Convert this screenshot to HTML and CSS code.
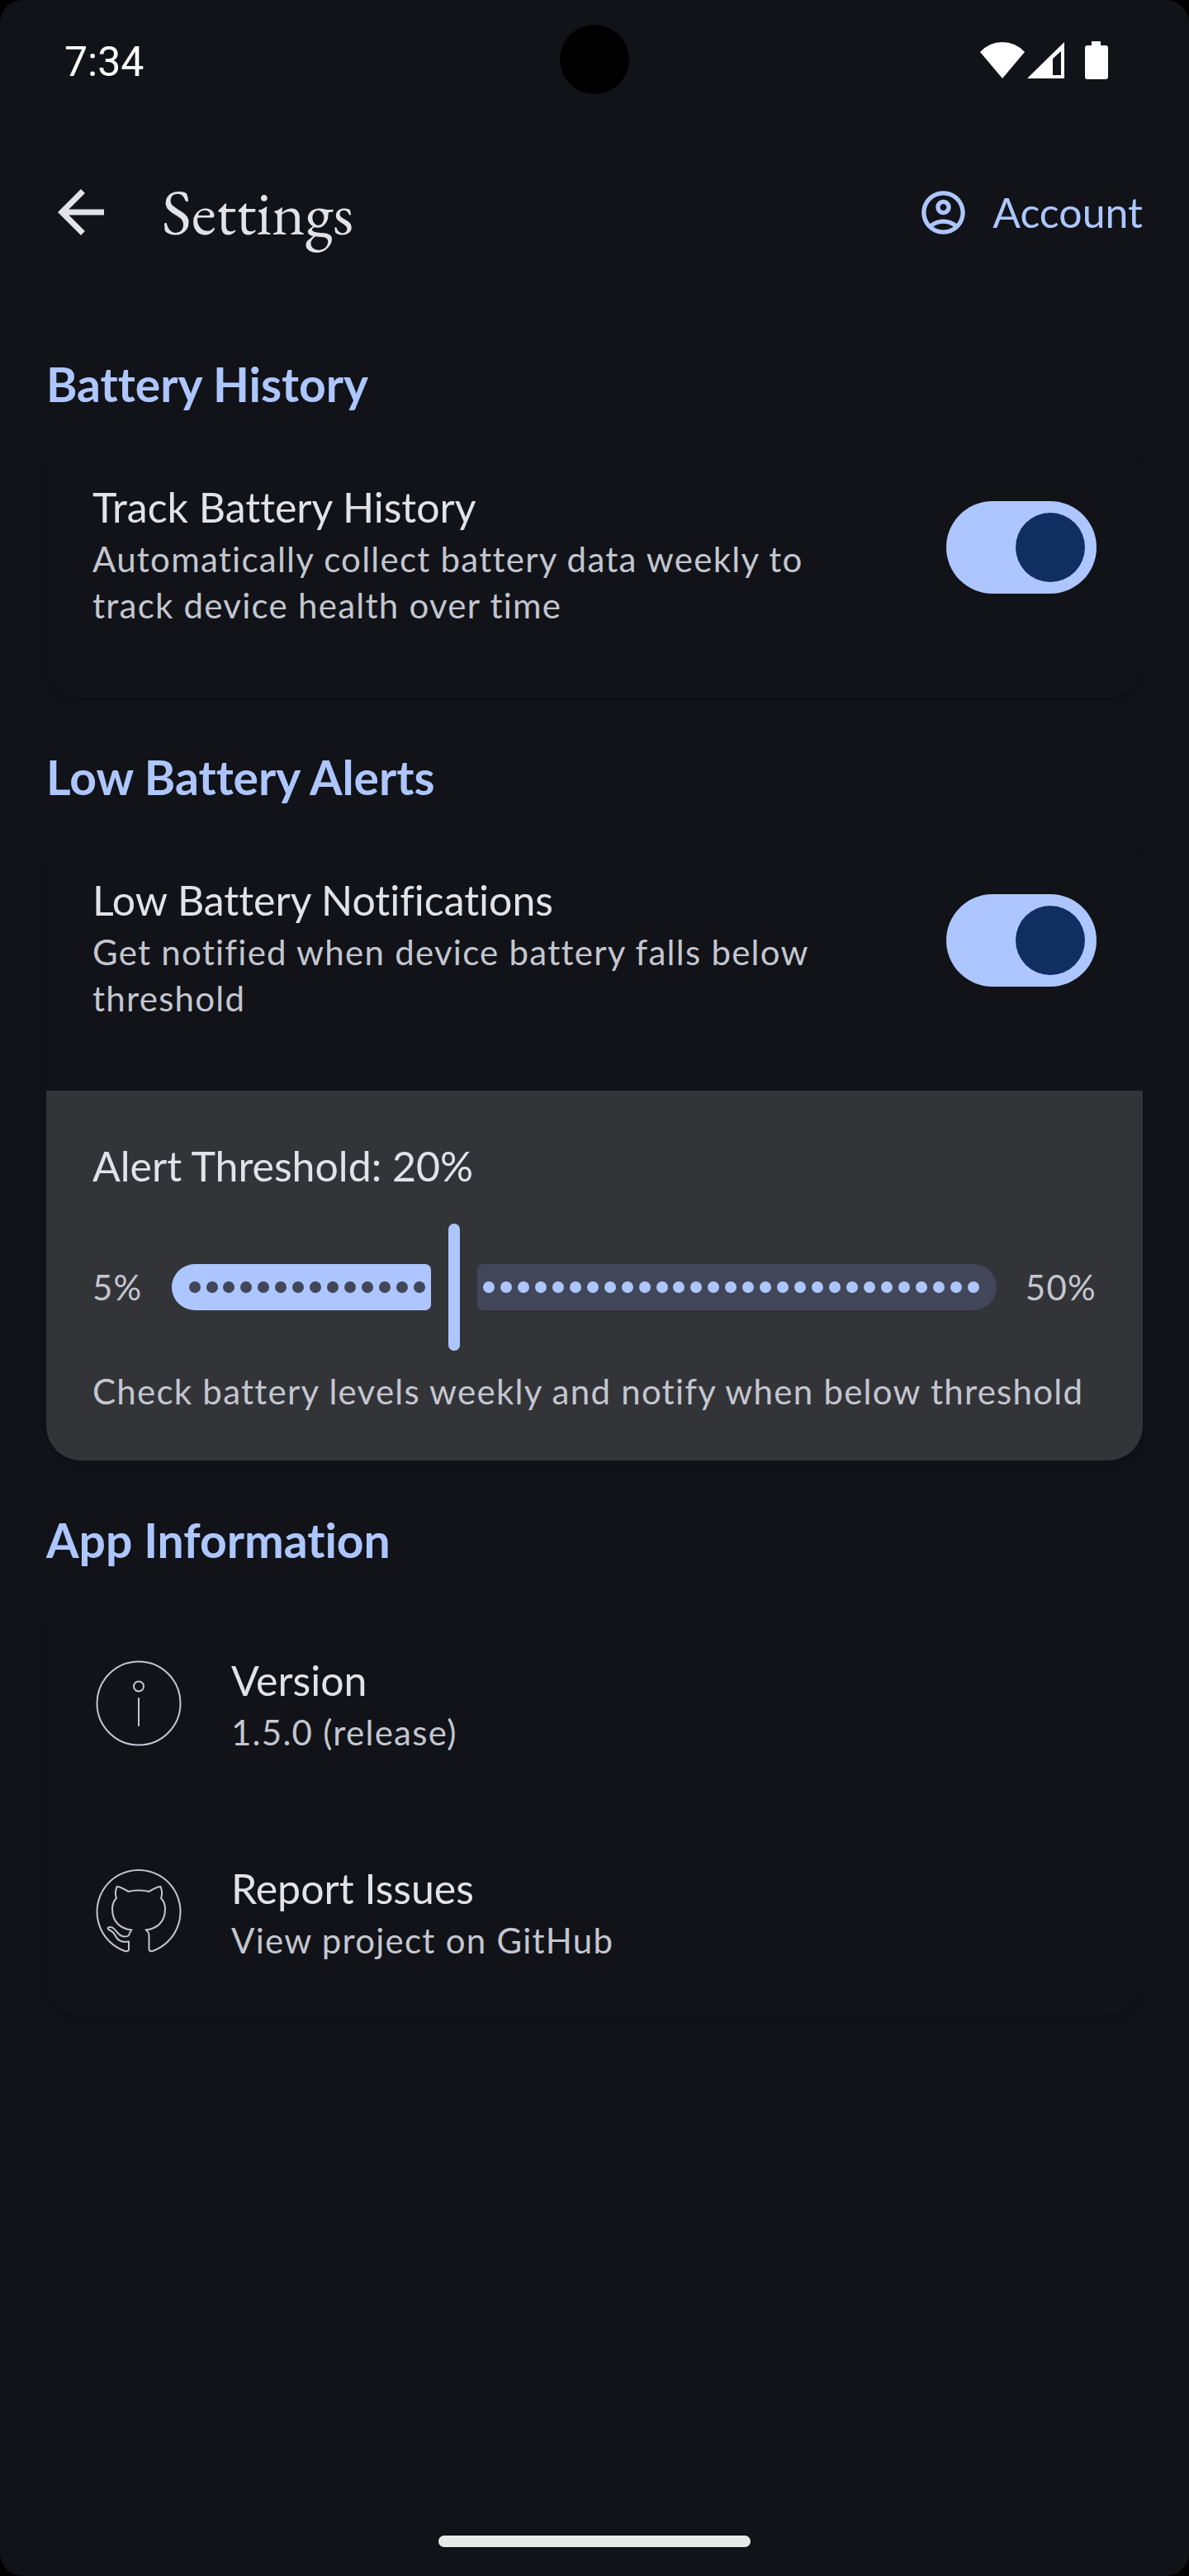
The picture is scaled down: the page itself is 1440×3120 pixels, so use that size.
FILE: index.html
```html
<!DOCTYPE html>
<html lang="en">
<head>
<meta charset="utf-8">
<meta name="viewport" content="width=device-width, initial-scale=1">
<title>Settings</title>
<link rel="stylesheet" href="styles.css">
</head>
<body>
<div class="screen">
  <div class="status-bar">
    <span class="clock">7:34</span>
    <span class="camera"></span>
    <span class="status-icons">
      <svg class="icon-wifi" viewBox="0 0 54 46" aria-hidden="true"><path d="M0 13Q11 1 27 1T54 13L27 45Z"/></svg>
      <svg class="icon-signal" viewBox="0 0 46 46" aria-hidden="true"><path fill-rule="evenodd" d="M0 45L45 1V45ZM31 21V41H41V12Z"/></svg>
      <svg class="icon-battery" viewBox="0 0 28 46" aria-hidden="true"><path d="M8 0H19V5H25Q28 5 28 8V43Q28 46 25 46H3Q0 46 0 43V8Q0 5 3 5H8Z"/></svg>
    </span>
  </div>

  <header class="app-bar">
    <button class="back" type="button" aria-label="Back">
      <svg viewBox="0 0 24 24" aria-hidden="true"><path d="M20 11H7.83l5.59-5.59L12 4l-8 8 8 8 1.41-1.41L7.83 13H20z"/></svg>
    </button>
    <h1>Settings</h1>
    <button class="account" type="button">
      <svg viewBox="0 0 24 24" aria-hidden="true"><path fill-rule="evenodd" d="M12 2C6.48 2 2 6.48 2 12s4.48 10 10 10 10-4.48 10-10S17.52 2 12 2zM7.35 18.5C8.66 17.56 10.26 17 12 17s3.34.56 4.65 1.5C15.34 19.44 13.74 20 12 20s-3.34-.56-4.65-1.5zm10.79-1.38C16.45 15.8 14.32 15 12 15s-4.45.8-6.14 2.12C4.7 15.73 4 13.95 4 12c0-4.42 3.58-8 8-8s8 3.58 8 8c0 1.950-.7 3.730-1.860 5.120z"/><path fill-rule="evenodd" d="M12 6c-1.930 0-3.500 1.570-3.500 3.500S10.070 13 12 13s3.500-1.570 3.500-3.500S13.930 6 12 6zm0 5c-.83 0-1.500-.67-1.500-1.500S11.170 8 12 8s1.500.67 1.500 1.500S12.830 11 12 11z"/></svg>
      <span>Account</span>
    </button>
  </header>

  <main class="content">
    <section>
      <h2>Battery History</h2>
      <div class="card">
        <label class="switch-row">
          <span class="text">
            <span class="title">Track Battery History</span>
            <span class="sub">Automatically collect battery data weekly to track device health over time</span>
          </span>
          <input class="switch" type="checkbox" role="switch" checked>
        </label>
      </div>
    </section>

    <section>
      <h2>Low Battery Alerts</h2>
      <div class="card">
        <label class="switch-row">
          <span class="text">
            <span class="title">Low Battery Notifications</span>
            <span class="sub">Get notified when device battery falls below threshold</span>
          </span>
          <input class="switch" type="checkbox" role="switch" checked>
        </label>
        <div class="panel">
          <label class="title" for="threshold">Alert Threshold: 20%</label>
          <div class="slider-row">
            <span class="sub">5%</span>
            <div class="slider">
              <div class="track">
                <div class="active"><i></i><i></i><i></i><i></i><i></i><i></i><i></i><i></i><i></i><i></i><i></i><i></i><i></i><i></i></div>
                <div class="inactive"><i></i><i></i><i></i><i></i><i></i><i></i><i></i><i></i><i></i><i></i><i></i><i></i><i></i><i></i><i></i><i></i><i></i><i></i><i></i><i></i><i></i><i></i><i></i><i></i><i></i><i></i><i></i><i></i><i></i></div>
              </div>
              <input id="threshold" type="range" min="5" max="50" step="1" value="20">
            </div>
            <span class="sub">50%</span>
          </div>
          <p class="sub">Check battery levels weekly and notify when below threshold</p>
        </div>
      </div>
    </section>

    <section>
      <h2>App Information</h2>
      <div class="card">
        <div class="info-row">
          <svg class="line-icon" viewBox="0 0 112 112" aria-hidden="true"><circle cx="56" cy="56" r="50.500"/><circle cx="56" cy="35.500" r="6"/><path d="M56 50V83"/></svg>
          <span class="text">
            <span class="title">Version</span>
            <span class="sub">1.5.0 (release)</span>
          </span>
        </div>
        <a class="info-row" href="#issues">
          <svg class="line-icon" viewBox="0 0 112 112" aria-hidden="true"><path d="M44 102V92.500C36 94 31 92 28 86C26 82 24 80 21 79C16 76 20 74 24 75.500C30 79 31 86.500 38 86.500C43 86.500 44.500 86 45 82L47.500 78.500C34 77 24 69 24 53C24 47 26 43 29 40C27 35 28 30 29.500 26C34 26 38 29 43.500 32Q56 29 68.500 32C74 29 78 26 82.500 26C84 30 85 35 83 40C86 43 88 47 88 53C88 69 78 77 64.500 78.500Q68.500 81 68.500 85V102Q69 105 73 104A50.500 50.500 0 1 0 39 104Q44 105 44 102Z"/></svg>
          <span class="text">
            <span class="title">Report Issues</span>
            <span class="sub">View project on GitHub</span>
          </span>
        </a>
      </div>
    </section>
  </main>

  <div class="nav-bar"><span class="pill"></span></div>
</div>
</body>
</html>
```
FILE: styles.css
```css
:root {
  --surface: #111318;
  --panel: #333438;
  --primary: #adc6ff;
  --on-primary: #102f60;
  --text: #e2e2e9;
  --muted: #c4c6d0;
  --track: #414659;
}

* { box-sizing: border-box; }

body {
  margin: 0;
  background: #000;
  color: var(--text);
  font: 50px/70px Lato, sans-serif;
  font-variant-ligatures: none;
}

h1, h2, p { margin: 0; }

button {
  border: 0;
  padding: 0;
  background: none;
  font: inherit;
  cursor: pointer;
}

.screen {
  min-height: 100vh;
  display: flex;
  flex-direction: column;
  background: var(--surface);
  border-radius: 28px;
}

/* Status bar */
.status-bar {
  display: grid;
  grid-template-columns: 1fr auto 1fr;
  align-items: center;
  height: 144px;
  color: #fff;
}
.clock {
  padding: 6px 0 0 78px;
  font: 50px/70px Roboto, sans-serif;
}
.camera {
  width: 84px;
  height: 84px;
  border-radius: 50%;
  background: #000;
}
.status-icons {
  display: flex;
  justify-content: flex-end;
  padding: 2px 98px 0 0;
  fill: #fff;
}
.status-icons svg { height: 46px; }
.icon-wifi { width: 54px; margin-right: 3px; }
.icon-signal { width: 46px; margin-right: 24px; }
.icon-battery { width: 28px; }

/* App bar */
.app-bar {
  display: flex;
  align-items: center;
  height: 226px;
  padding: 0 56px;
}
.app-bar svg { display: block; fill: currentColor; }
.back { color: var(--text); }
.back svg { width: 84px; height: 84px; }
h1 {
  flex: 1;
  margin-left: 56px;
  font: 400 77px/98px "EB Garamond", "Liberation Serif", serif;
}
.account {
  display: flex;
  align-items: center;
  gap: 28px;
  color: var(--primary);
}
.account svg { width: 63px; height: 63px; }

/* Content */
.content {
  flex: 1;
  padding: 53px 56px 0;
}
h2 {
  padding: 0 0 30px;
  color: var(--primary);
  font: 700 57px/84px Lato, sans-serif;
  font-variant-ligatures: none;
}
section + section { margin-top: 54px; }

.card {
  overflow: hidden;
  border-radius: 42px;
  background: var(--surface);
  box-shadow: 0 4px 8px rgba(0, 0, 0, 0.18);
}
.text { flex: 1; }
.title, .sub { display: block; }
.sub {
  color: var(--muted);
  font-size: 42px;
  line-height: 56px;
  letter-spacing: 0.03em;
}

.switch-row {
  display: flex;
  align-items: flex-start;
  gap: 112px;
  padding: 42px 56px 84px;
}
.switch {
  appearance: none;
  flex: none;
  width: 182px;
  height: 112px;
  margin: 28px 0 0;
  padding: 14px;
  border-radius: 56px;
  background: var(--primary);
}
.switch::before {
  content: "";
  display: block;
  width: 84px;
  height: 84px;
  border-radius: 50%;
  background: var(--on-primary);
}
.switch:checked::before { margin-left: auto; }

/* Threshold panel */
.panel {
  padding: 56px;
  background: var(--panel);
}
.slider-row {
  display: flex;
  align-items: center;
  gap: 35px;
  margin: 35px 0 21px;
}
.slider {
  flex: 1;
  display: grid;
  align-items: center;
}
.slider > * { grid-area: 1 / 1; }
.track {
  display: flex;
  gap: 56px;
}
.active, .inactive {
  display: flex;
  justify-content: space-between;
  align-items: center;
  height: 56px;
}
.active {
  width: calc((100% - 56px) / 3);
  padding: 0 7px 0 21px;
  border-radius: 28px 7px 7px 28px;
  background: var(--primary);
}
.inactive {
  flex: 1;
  padding: 0 21px 0 7px;
  border-radius: 7px 28px 28px 7px;
  background: var(--track);
}
.track i {
  width: 14px;
  height: 14px;
  border-radius: 50%;
  background: var(--track);
}
.inactive i { background: var(--primary); }
.slider input {
  appearance: none;
  width: auto;
  height: 154px;
  margin: 0 21px;
  background: none;
}
.slider input::-webkit-slider-thumb {
  appearance: none;
  width: 14px;
  height: 154px;
  border-radius: 7px;
  background: var(--primary);
}

/* App information */
.info-row {
  display: flex;
  align-items: center;
  gap: 56px;
  height: 252px;
  padding: 0 56px;
  color: inherit;
  text-decoration: none;
}
.line-icon {
  width: 112px;
  height: 112px;
  fill: none;
  stroke: var(--muted);
  stroke-width: 2;
  stroke-linecap: round;
  stroke-linejoin: round;
}

/* Gesture bar */
.nav-bar {
  display: flex;
  justify-content: center;
  padding: 35px 0;
}
.pill {
  width: 378px;
  height: 14px;
  border-radius: 7px;
  background: #e7eae8;
}
```
